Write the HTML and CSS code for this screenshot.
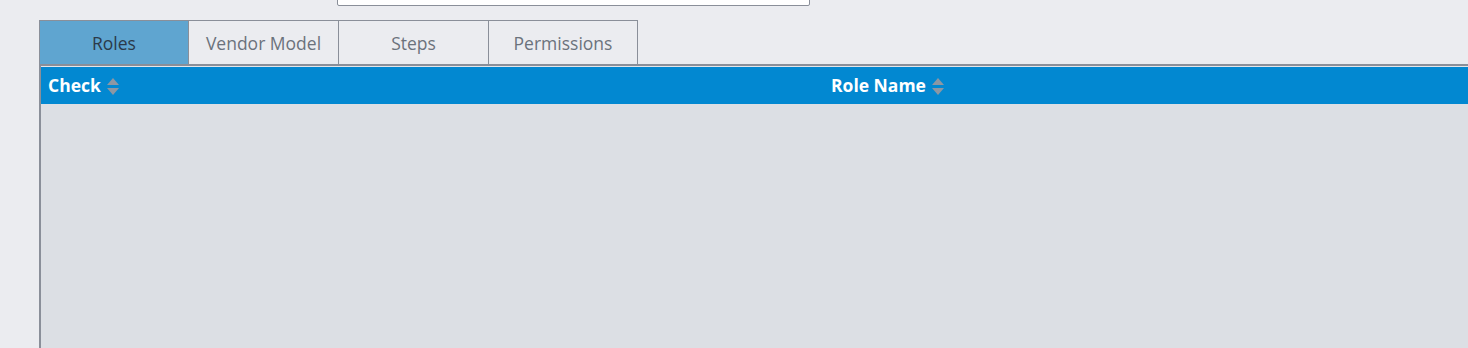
FILE: index.html
```html
<!DOCTYPE html>
<html lang="en">
<head>
    <meta charset="UTF-8">
    <meta name="viewport" content="width=device-width, initial-scale=1.0">
    <title>Roles</title>
    <link rel="stylesheet" href="styles.css">
</head>
<body>
    <div class="topbar">
        <input class="search" type="text">
    </div>

    <div class="tabs">
        <div class="tab active">Roles</div>
        <div class="tab">Vendor Model</div>
        <div class="tab">Steps</div>
        <div class="tab last">Permissions</div>
    </div>

    <div class="panel">
        <div class="grid-head">
            <div class="col col-check">Check <span class="sort"><i class="up"></i><i class="down"></i></span></div>
            <div class="col col-name">Role Name <span class="sort"><i class="up"></i><i class="down"></i></span></div>
        </div>
        <div class="grid-body"></div>
    </div>
</body>
</html>
```

FILE: styles.css
```css
* { margin: 0; padding: 0; box-sizing: border-box; }
body {
    font-family: 'Open Sans', 'Noto Sans', sans-serif;
    background: #ebecf0;
    height: 348px;
    overflow: hidden;
}
.topbar { display: flow-root; height: 20px; padding-left: 337px; }
.search {
    display: block;
    width: 473px;
    height: 32px;
    margin-top: -26px;
    border: 1px solid #8a8f99;
    border-radius: 2px;
    background: #fff;
}
.tabs { display: flex; margin-left: 39px; }
.tab {
    width: 150px;
    height: 44px;
    border: 1px solid #8a8f99;
    border-bottom: none;
    border-right: none;
    display: flex;
    align-items: center;
    justify-content: center;
    font-size: 17.5px;
    color: #6b727c;
    padding-top: 1px;
}
.tab.active { width: 149px; background: #5fa5d0; color: #2b3a4a; }
.tab.last { border-right: 1px solid #8a8f99; }
.panel {
    margin-left: 39px;
    border-top: 2px solid #8a8f99;
    border-left: 2px solid #8a8f99;
    padding-top: 1px;
    background: #e4e6ea;
    height: 284px;
}
.grid-head {
    display: flex;
    height: 37px;
    background: #0288d1;
    color: #fff;
    font-weight: bold;
    font-size: 17.5px;
}
.col { display: flex; align-items: center; padding-left: 7px; padding-bottom: 1px; }
.col-check { width: 783px; }
.sort {
    display: inline-flex;
    flex-direction: column;
    gap: 3px;
    margin-left: 6px;
    margin-top: 2px;
}
.sort i {
    display: block;
    width: 0;
    height: 0;
    border-left: 6px solid transparent;
    border-right: 6px solid transparent;
}
.sort .up { border-bottom: 7px solid #8c97a3; }
.sort .down { border-top: 7px solid #8c97a3; }
.grid-body { background: #dcdfe4; height: 244px; }
```
